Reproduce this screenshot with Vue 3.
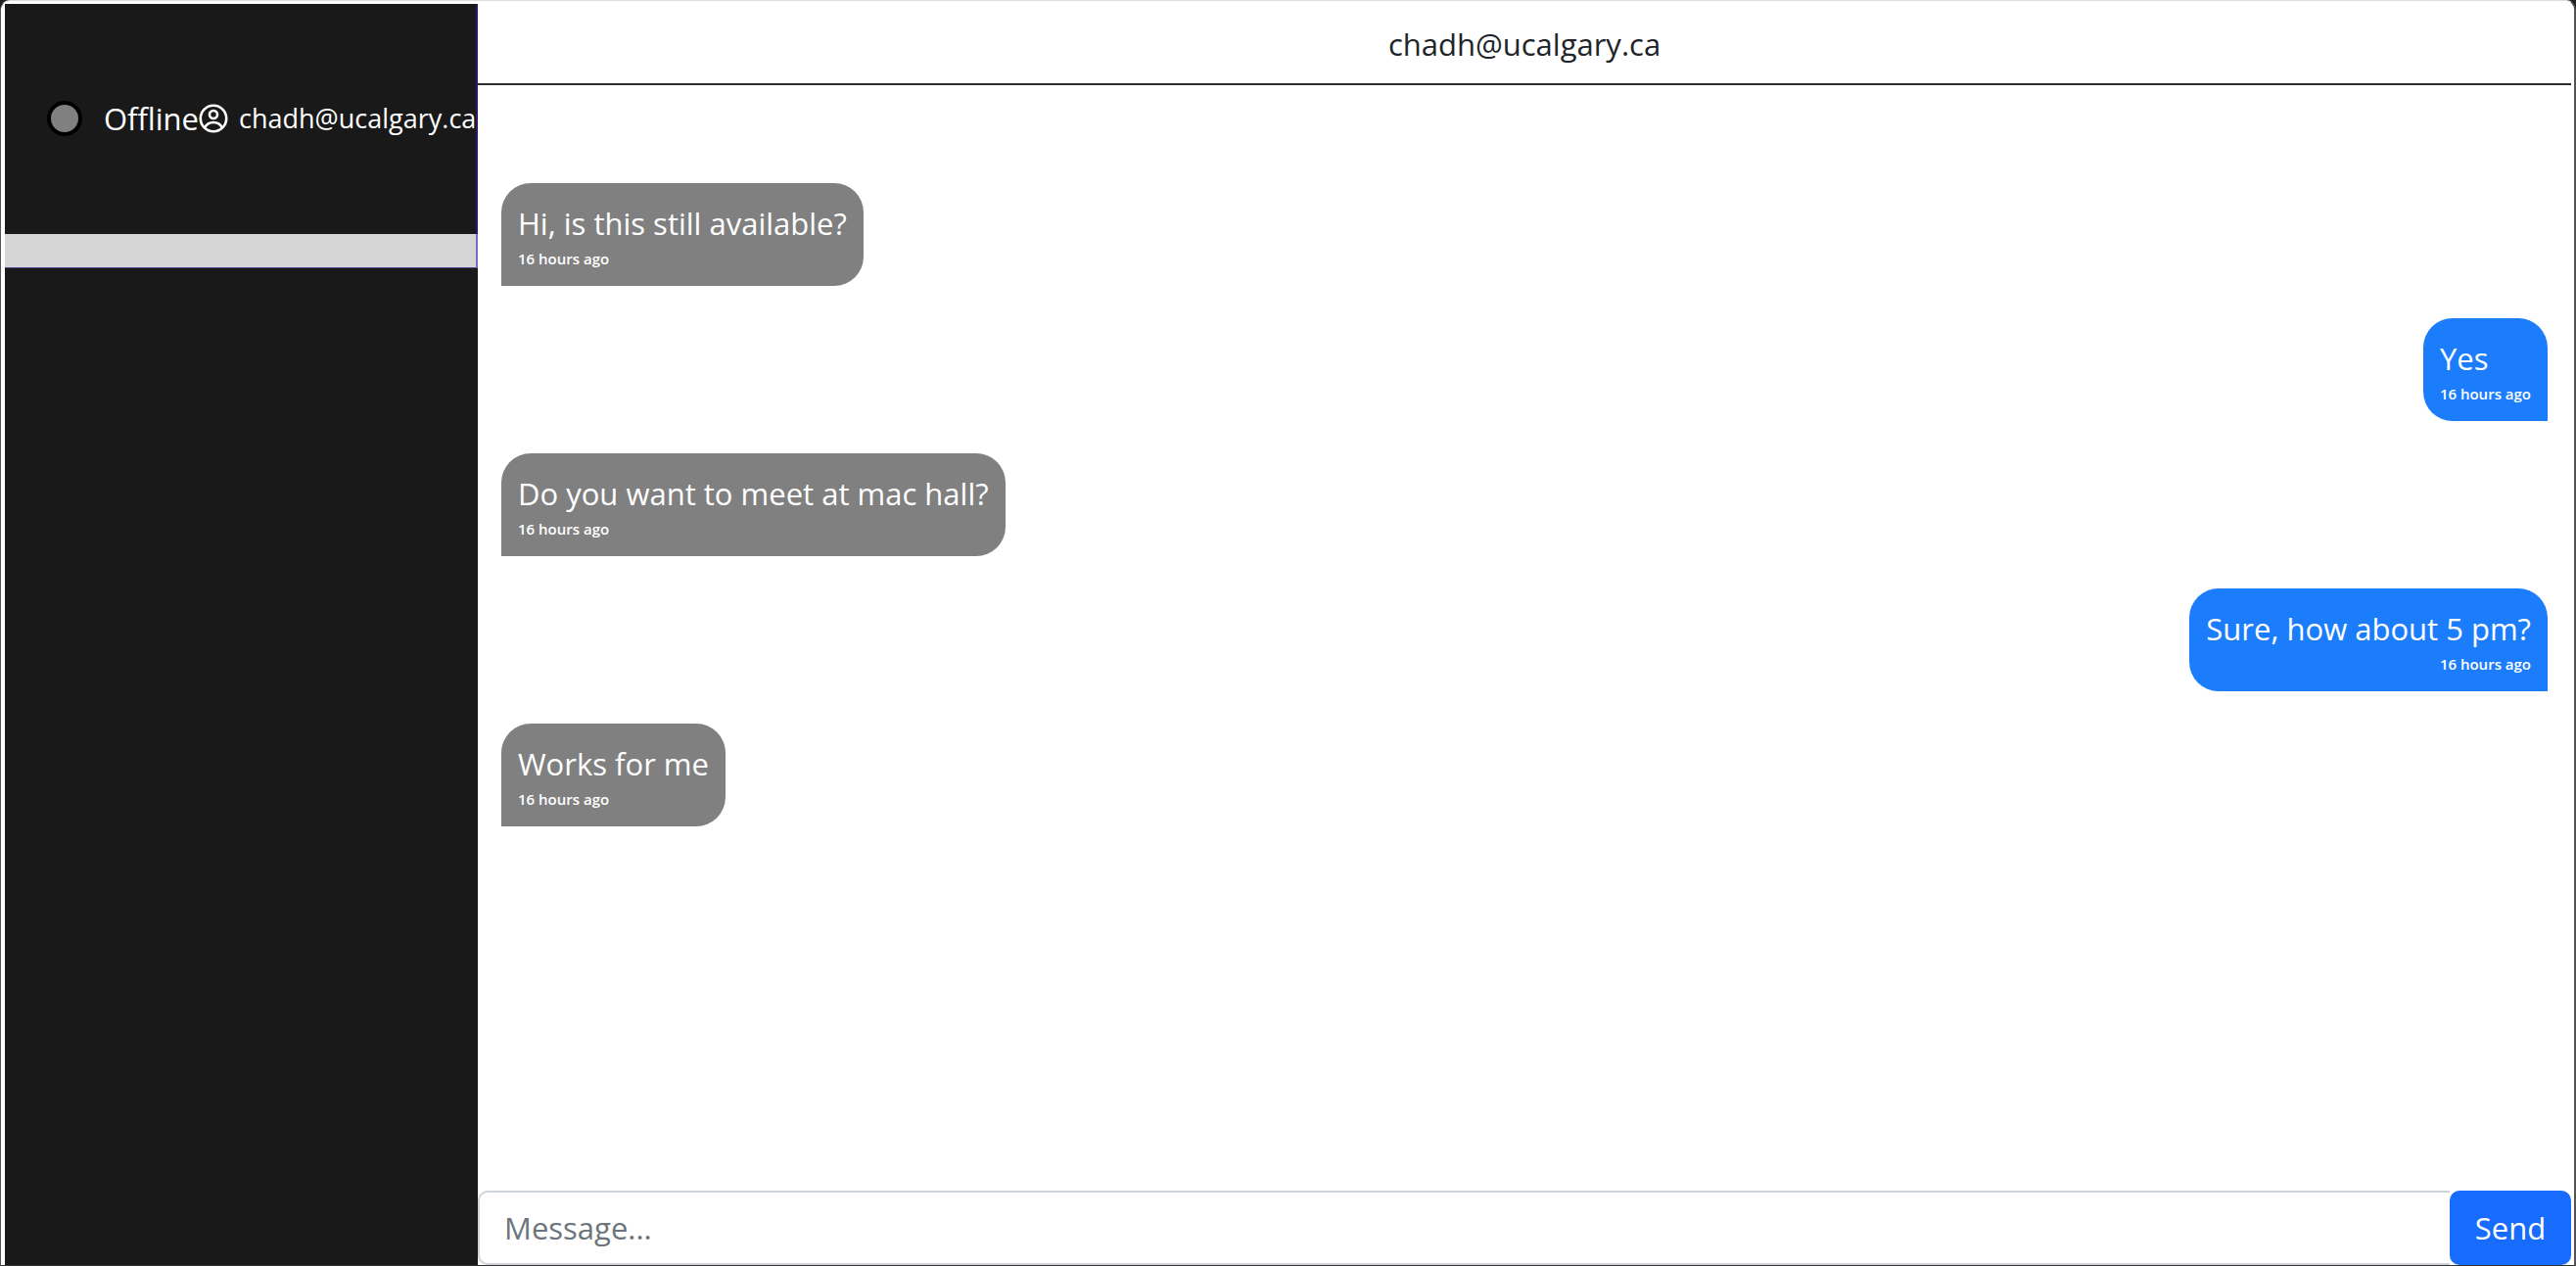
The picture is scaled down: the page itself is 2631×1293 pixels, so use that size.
<script setup>
import { ref } from 'vue'

const email = 'chadh@ucalgary.ca'
const draft = ref('')
const messages = ref([
  { id: 1, text: 'Hi, is this still available?', time: '16 hours ago', own: false },
  { id: 2, text: 'Yes', time: '16 hours ago', own: true },
  { id: 3, text: 'Do you want to meet at mac hall?', time: '16 hours ago', own: false },
  { id: 4, text: 'Sure, how about 5 pm?', time: '16 hours ago', own: true },
  { id: 5, text: 'Works for me', time: '16 hours ago', own: false },
])

function send() {
  const text = draft.value.trim()
  if (!text) return
  messages.value.push({ id: messages.value.length + 1, text, time: 'just now', own: true })
  draft.value = ''
}
</script>

<template>
  <div class="window">
    <aside class="sidebar">
      <div class="contact">
        <span class="dot"></span>
        <span class="status">Offline</span>
        <svg class="avatar" viewBox="0 0 30 30" fill="none" stroke="#fff" stroke-width="2.6" aria-hidden="true">
          <circle cx="15" cy="15" r="13.2" />
          <circle cx="15" cy="11" r="4" />
          <path d="M6 24.5c2-4 5-5.5 9-5.5s7 1.500 9 5.500" />
        </svg>
        <span class="contact-email">{{ email }}</span>
      </div>
      <div class="strip"></div>
    </aside>

    <main class="chat">
      <header class="chat-header">{{ email }}</header>
      <ul class="messages">
        <li v-for="m in messages" :key="m.id" class="bubble" :class="{ own: m.own }">
          <span class="text">{{ m.text }}</span>
          <span class="time">{{ m.time }}</span>
        </li>
      </ul>
      <form class="composer" @submit.prevent="send">
        <input v-model="draft" class="field" type="text" placeholder="Message..." aria-label="Message" />
        <button class="send" type="submit">Send</button>
      </form>
    </main>
  </div>
</template>

<style>
body {
  margin: 0;
  background: #202020;
}
</style>

<style scoped>
.window {
  box-sizing: border-box;
  display: grid;
  grid-template-columns: 483px 1fr;
  height: 100vh;
  padding: 3px 3px 0 4px;
  border: 1px solid #555;
  border-top-color: #ddd;
  border-right-width: 2px;
  border-bottom: 1px solid #333;
  border-radius: 10px 10px 0 0;
  background: #fff;
  font-family: "Segoe UI", "Open Sans", "Noto Sans", sans-serif;
  font-size: 31px;
  line-height: 48px;
}

.sidebar {
  background: #191919;
  overflow: hidden;
}

.contact {
  box-sizing: border-box;
  display: flex;
  align-items: center;
  height: 235px;
  padding: 0 0 2px 43px;
  border-right: 2px solid #2a1a66;
  color: #fff;
  white-space: nowrap;
}

.dot {
  box-sizing: border-box;
  flex: none;
  width: 36px;
  height: 36px;
  margin-right: 22px;
  border: 4px solid #000;
  border-radius: 50%;
  background: #808080;
}

.avatar {
  flex: none;
  width: 30px;
  height: 30px;
  margin-right: 11px;
}

.contact-email {
  font-size: 27px;
}

.strip {
  height: 34px;
  border-right: 2px solid #7b68c8;
  border-bottom: 1px solid #4a3f8a;
  background: #d5d5d5;
}

.chat {
  display: flex;
  flex-direction: column;
  min-width: 0;
  min-height: 0;
}

.chat-header {
  padding: 17px 0 16px;
  border-bottom: 2px solid #2b2e2d;
  color: #212529;
  text-align: center;
}

.messages {
  flex: 1;
  display: flex;
  flex-direction: column;
  align-items: flex-start;
  gap: 33px;
  min-height: 0;
  margin: 0;
  padding: 100px 24px 0;
  overflow: auto;
  list-style: none;
}

.bubble {
  box-sizing: border-box;
  display: flex;
  flex-direction: column;
  height: 105px;
  padding: 17px 17px 0;
  border-radius: 30px 30px 30px 0;
  background: #808080;
  color: #fff;
}

.bubble.own {
  align-self: flex-end;
  border-radius: 30px 30px 0 30px;
  background: #1c7dfc;
}

.time {
  font-size: 15px;
  font-weight: 600;
  line-height: 24px;
}

.own .time {
  text-align: right;
}

.composer {
  display: flex;
}

.field {
  box-sizing: border-box;
  flex: 1;
  min-width: 0;
  height: 76px;
  padding: 0 25px;
  border: 2px solid #ced4da;
  border-right: 0;
  border-radius: 10px 0 0 10px;
  outline: none;
  background: #fff;
  color: #212529;
  font: inherit;
}

.field::placeholder {
  color: #6c757d;
  opacity: 1;
}

.send {
  width: 124px;
  height: 76px;
  padding: 0;
  border: 0;
  border-radius: 10px;
  background: #176cfd;
  color: #fff;
  font: inherit;
}
</style>
